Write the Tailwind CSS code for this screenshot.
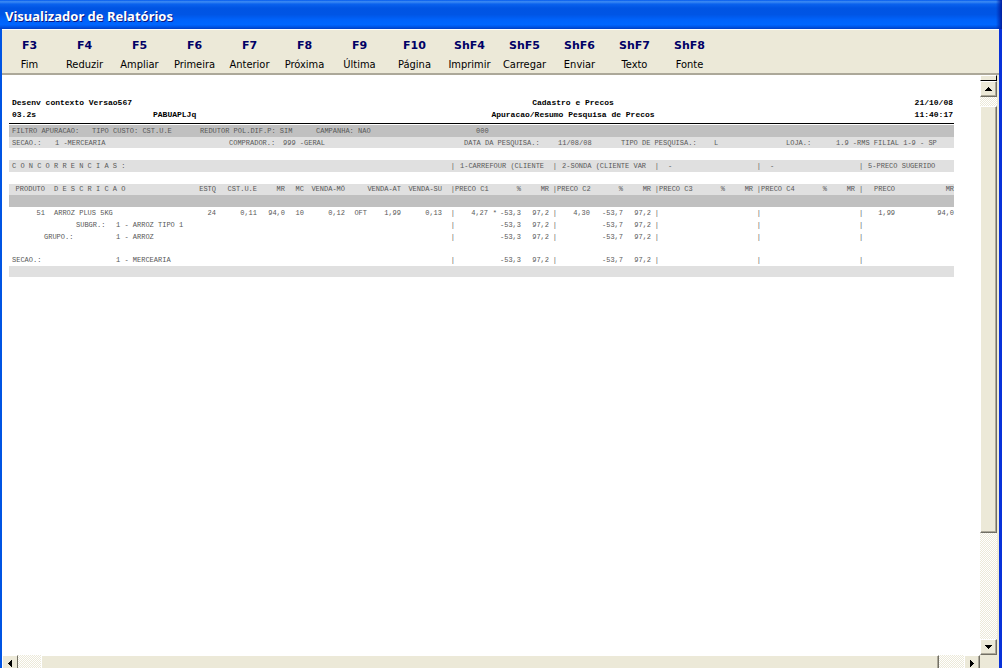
<!DOCTYPE html>
<html lang="pt-BR">
<head>
<meta charset="utf-8">
<meta name="viewport" content="width=device-width, initial-scale=1">
<title>Visualizador de Relatórios</title>
<script src="https://cdn.jsdelivr.net/npm/@tailwindcss/browser@4"></script>
</head>
<body class="h-screen overflow-hidden flex flex-col bg-[#ece9d8] font-['DejaVu_Sans_Condensed','DejaVu_Sans',sans-serif]">
<header class="h-[29px] shrink-0 flex items-center px-[5px] pt-[3px] bg-[linear-gradient(to_left,#001ea0_0,#001ea000_6px),linear-gradient(#0058ee_0%,#3f8cf3_6%,#0a62ee_14%,#0054e3_28%,#0055e5_50%,#0062fa_68%,#0066ff_85%,#0056e8_92%,#003fc4_100%)]">
  <h1 class="text-[13px] leading-4 font-bold text-white whitespace-nowrap [text-shadow:1px_1px_0_#0a1883] font-['Noto_Sans',sans-serif]">Visualizador de Relatórios</h1>
</header>
<div class="flex-1 min-h-0 flex flex-col border-l-2 border-l-[#0054e3] border-r-3 border-r-[#0831d9]">
  <nav aria-label="Comandos" class="h-[46px] shrink-0 flex border-t border-t-white border-b-2 border-b-[#aca899] text-[11px] leading-[19px] text-black [&>button]:w-[55px] [&>button]:flex [&>button]:flex-col [&>button]:items-center [&>button]:pt-1.5 [&_b]:text-[#000066] [&_b]:font-['DejaVu_Sans',sans-serif]">
    <button><b>F3</b><span>Fim</span></button>
    <button><b>F4</b><span>Reduzir</span></button>
    <button><b>F5</b><span>Ampliar</span></button>
    <button><b>F6</b><span>Primeira</span></button>
    <button><b>F7</b><span>Anterior</span></button>
    <button><b>F8</b><span>Próxima</span></button>
    <button><b>F9</b><span>Última</span></button>
    <button><b>F10</b><span>Página</span></button>
    <button><b>ShF4</b><span>Imprimir</span></button>
    <button><b>ShF5</b><span>Carregar</span></button>
    <button><b>ShF6</b><span>Enviar</span></button>
    <button><b>ShF7</b><span>Texto</span></button>
    <button><b>ShF8</b><span>Fonte</span></button>
  </nav>
  <div class="flex-1 min-h-0 flex">
    <div class="flex-1 min-w-0 flex flex-col">
      <main class="flex-1 min-h-0 overflow-hidden bg-white pl-[7px] pr-[26px] pt-[22px] whitespace-nowrap text-[7px] leading-3 text-[#585858] font-['Liberation_Mono',monospace]">
        <div class="grid grid-cols-[141fr_323fr_194fr_284fr] pl-[3px] text-[8px] font-bold text-black border-b border-black pb-[2px] [&>*]:min-w-0">
          <span class="col-span-2">Desenv contexto Versao567</span><span class="text-center">Cadastro e Precos</span><span class="text-right pr-[1px]">21/10/08</span>
          <span>03.2s</span><span>PABUAPLJq</span><span class="text-center">Apuracao/Resumo Pesquisa de Precos</span><span class="text-right pr-[1px]">11:40:17</span>
        </div>
        <div class="mt-px h-3 bg-[#c0c0c0] pl-[3px] grid grid-cols-[80fr_108fr_116fr_160fr_478fr] [&>*]:min-w-0">
          <span>FILTRO APURACAO:</span><span>TIPO CUSTO: CST.U.E</span><span>REDUTOR POL.DIF.P: SIM</span><span>CAMPANHA: NAO</span><span>000</span>
        </div>
        <div class="h-[11px] bg-[#e0e0e0] pl-[3px] grid grid-cols-[43fr_174fr_54fr_181fr_94fr_63fr_93fr_72fr_50fr_118fr] [&>*]:min-w-0">
          <span>SECAO.:</span><span>1 -MERCEARIA</span><span>COMPRADOR.:</span><span>999 -GERAL</span><span>DATA DA PESQUISA.:</span><span>11/08/08</span><span>TIPO DE PESQUISA.:</span><span>L</span><span>LOJA.:</span><span>1.9 -RMS FILIAL 1-9 - SP</span>
        </div>
        <table class="mt-3 w-full table-fixed border-collapse [&_th]:font-normal [&_th]:p-0 [&_td]:p-0 [&_th]:text-right [&_td]:text-right">
          <colgroup>
            <col class="w-[36px]"><col class="w-[151px]"><col class="w-[20px]"><col class="w-[41px]"><col class="w-[28px]"><col class="w-[19px]"><col class="w-[41px]"><col class="w-[22px]"><col class="w-[34px]"><col class="w-[41px]">
            <col class="w-[13px]"><col class="w-[33px]"><col class="w-[9px]"><col class="w-[24px]"><col class="w-[28px]">
            <col class="w-[8px]"><col class="w-[33px]"><col class="w-[9px]"><col class="w-[24px]"><col class="w-[28px]">
            <col class="w-[8px]"><col class="w-[33px]"><col class="w-[9px]"><col class="w-[24px]"><col class="w-[28px]">
            <col class="w-[8px]"><col class="w-[33px]"><col class="w-[9px]"><col class="w-[24px]"><col class="w-[28px]">
            <col class="w-[8px]"><col class="w-[32px]"><col class="w-[59px]">
          </colgroup>
          <thead>
            <tr class="h-3 bg-[#e0e0e0]"><th colspan="10"><div class="text-left pl-[3px]">C O N C O R R E N C I A S :</div></th><th>|</th><th colspan="4"><div class="text-left pl-[5px]">1-CARREFOUR (CLIENTE</div></th><th>|</th><th colspan="4"><div class="text-left pl-[5px]">2-SONDA (CLIENTE VAR</div></th><th>|</th><th colspan="4"><div class="text-left pl-[9px]">-</div></th><th>|</th><th colspan="4"><div class="text-left pl-[9px]">-</div></th><th>|</th><th colspan="2"><div class="text-left pl-[5px]">5-PRECO SUGERIDO</div></th></tr>
            <tr class="h-3"><td colspan="33"></td></tr>
            <tr class="h-[11px] leading-[11px] bg-[#e0e0e0]"><th>PRODUTO</th><th><div class="text-left pl-[9px]">D E S C R I C A O</div></th><th>ESTQ</th><th>CST.U.E</th><th>MR</th><th>MC</th><th>VENDA-MÖ</th><th></th><th>VENDA-AT</th><th>VENDA-SU</th><th>|</th><th>PRECO C1</th><th></th><th>%</th><th>MR</th><th>|</th><th>PRECO C2</th><th></th><th>%</th><th>MR</th><th>|</th><th>PRECO C3</th><th></th><th>%</th><th>MR</th><th>|</th><th>PRECO C4</th><th></th><th>%</th><th>MR</th><th>|</th><th>PRECO</th><th>MR</th></tr>
            <tr class="h-3 bg-[#c0c0c0]"><td colspan="33"></td></tr>
          </thead>
          <tbody>
            <tr class="h-3"><td>51</td><td><div class="text-left pl-[9px]">ARROZ PLUS 5KG</div></td><td>24</td><td>0,11</td><td>94,0</td><td>10</td><td>0,12</td><td>OFT</td><td>1,99</td><td>0,13</td><td>|</td><td>4,27</td><td>*</td><td>-53,3</td><td>97,2</td><td>|</td><td>4,30</td><td></td><td>-53,7</td><td>97,2</td><td>|</td><td></td><td></td><td></td><td></td><td>|</td><td></td><td></td><td></td><td></td><td>|</td><td>1,99</td><td>94,0</td></tr>
            <tr class="h-3"><td colspan="10"><div class="flex text-left"><span class="w-[107px] pl-[67px]">SUBGR.:</span><span>1 - ARROZ TIPO 1</span></div></td><td>|</td><td></td><td></td><td>-53,3</td><td>97,2</td><td>|</td><td></td><td></td><td>-53,7</td><td>97,2</td><td>|</td><td colspan="4"></td><td>|</td><td colspan="4"></td><td>|</td><td></td><td></td></tr>
            <tr class="h-3"><td colspan="10"><div class="flex text-left"><span class="w-[107px] pl-[35px]">GRUPO.:</span><span>1 - ARROZ</span></div></td><td>|</td><td></td><td></td><td>-53,3</td><td>97,2</td><td>|</td><td></td><td></td><td>-53,7</td><td>97,2</td><td>|</td><td colspan="4"></td><td>|</td><td colspan="4"></td><td>|</td><td></td><td></td></tr>
            <tr class="h-[11px]"><td colspan="33"></td></tr>
            <tr class="h-3"><td colspan="10"><div class="flex text-left"><span class="w-[107px] pl-[3px]">SECAO.:</span><span>1 - MERCEARIA</span></div></td><td>|</td><td></td><td></td><td>-53,3</td><td>97,2</td><td>|</td><td></td><td></td><td>-53,7</td><td>97,2</td><td>|</td><td colspan="4"></td><td>|</td><td colspan="4"></td><td>|</td><td></td><td></td></tr>
            <tr class="h-[11px] bg-[#e0e0e0]"><td colspan="33"></td></tr>
          </tbody>
        </table>
      </main>
      <div class="h-[13px] shrink-0 flex overflow-hidden bg-[repeating-conic-gradient(#fff_0_25%,#ece9d8_0_50%)] bg-[length:2px_2px]">
        <button aria-label="Rolar para a esquerda" class="w-4 h-4 shrink-0 flex items-center justify-center bg-[#ece9d8] border border-t-white border-l-white border-r-[#716f64] border-b-[#716f64]"><svg class="w-1 h-[7px]" viewBox="0 0 4 7" shape-rendering="crispEdges"><path d="M3 0h1v7H3zM2 1h1v5H2zM1 2h1v3H1zM0 3h1v1H0z"/></svg></button>
        <div class="flex-1 ml-[23px] mr-[25px] h-4 bg-[#ece9d8] border border-t-white border-l-white border-r-[#716f64] shadow-[inset_-1px_0_#aca899]"></div>
        <button aria-label="Rolar para a direita" class="w-4 h-4 shrink-0 flex items-center justify-center bg-[#ece9d8] border border-t-white border-l-white border-r-[#716f64] border-b-[#716f64] shadow-[inset_-1px_-1px_#aca899]"><svg class="w-1 h-[7px]" viewBox="0 0 4 7" shape-rendering="crispEdges"><path d="M0 0h1v7H0zM1 1h1v5H1zM2 2h1v3H2zM3 3h1v1H3z"/></svg></button>
      </div>
    </div>
    <div class="w-[19px] shrink-0 flex flex-col pr-[2px] bg-[#ece9d8]">
      <div class="flex-1 min-h-0 flex flex-col bg-[repeating-conic-gradient(#fff_0_25%,#ece9d8_0_50%)] bg-[length:2px_2px]">
        <div class="h-1.5 shrink-0 bg-[#ece9d8] border-t border-l border-t-white border-l-white border-b border-r border-b-black border-r-black"></div>
        <button aria-label="Rolar para cima" class="h-4 shrink-0 flex items-center justify-center bg-[#ece9d8] border border-t-white border-l-white border-r-[#716f64] border-b-[#716f64] shadow-[inset_-1px_-1px_#aca899]"><svg class="w-[7px] h-1" viewBox="0 0 7 4" shape-rendering="crispEdges"><path d="M3 0h1v1H3zM2 1h3v1H2zM1 2h5v1H1zM0 3h7v1H0z"/></svg></button>
        <div class="mt-[9px] grow-[426] basis-0 bg-[#ece9d8] border border-t-white border-l-white border-r-[#716f64] border-b-[#716f64] shadow-[inset_-1px_-1px_#aca899]"></div>
        <div class="grow-[106] basis-0"></div>
        <button aria-label="Rolar para baixo" class="h-4 shrink-0 flex items-center justify-center bg-[#ece9d8] border border-t-white border-l-white border-r-[#716f64] border-b-[#716f64] shadow-[inset_-1px_-1px_#aca899]"><svg class="w-[7px] h-1" viewBox="0 0 7 4" shape-rendering="crispEdges"><path d="M0 0h7v1H0zM1 1h5v1H1zM2 2h3v1H2zM3 3h1v1H3z"/></svg></button>
      </div>
      <div class="h-[13px] shrink-0"></div>
    </div>
  </div>
</div>
</body>
</html>
